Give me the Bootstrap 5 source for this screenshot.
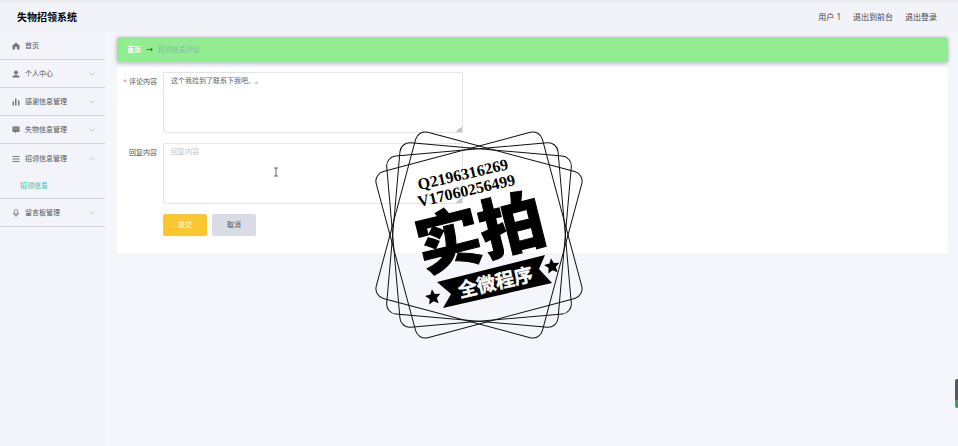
<!DOCTYPE html>
<html lang="zh-CN">
<head>
<meta charset="utf-8">
<meta name="viewport" content="width=device-width, initial-scale=1">
<title>失物招领系统</title>
<link href="https://cdn.jsdelivr.net/npm/bootstrap@5.3.0/dist/css/bootstrap.min.css" rel="stylesheet">
<style>
body{font-family:"Noto Sans","Noto Sans CJK SC",sans-serif;font-size:7px;line-height:12px;color:#606266;background:#f5f6fb;text-spacing-trim:space-all}
.topbar{background:#f2f3f9;border-top:2px solid #e9ebef;height:32px;padding:0 21px 0 17px}
.brand{font-size:10px;line-height:16px;font-weight:700;color:#000}
.topbar .btn,.topbar span{font-size:8px;line-height:12px;color:#444}
.side{width:105px;background:#f2f4fa;font-size:7px}
.side-link{height:28px;padding:0 10px 0 12px;color:#555;border-bottom:1px solid #d0d3da;line-height:12px;gap:5px;font-size:7px}
.side-link.open{border-bottom:0;height:30px}
.side-link svg{flex:none}
.sub{height:25px;padding-left:20px;color:#3fbfa8;border-bottom:1px solid #d0d3da}
.content-area{padding:5px 10px 0 12px}
.crumbs{background:#90ee90;height:25px;padding:0 10px;gap:5px;border-radius:2px;box-shadow:0 1px 4px rgba(80,90,110,.45);margin-bottom:5px}
.crumbs a{color:#fff;font-weight:700}
.crumbs .now{color:#8fb5ab}
.panel{padding:5px 6px 17px 0}
.fields{width:346px}
.field-row{margin-bottom:10px}
.field-label{width:40px;margin-right:6px;padding-top:4px;text-align:right;color:#555}
.field-label i{color:#d7838a;font-style:normal}
.field-box.form-control{height:61px;min-height:0;padding:2px 7px;font-size:7px;line-height:12px;border:1px solid #e2e4ea;border-radius:2px;color:#606266;text-spacing-trim:space-all;font-kerning:none;font-feature-settings:"chws" 0,"halt" 0}
.field-box::placeholder{color:#c0c4cc}
.field-box::-webkit-resizer{background:linear-gradient(135deg,transparent 80%,#c4c6ca 80%)}
.actions{gap:5px;padding-left:46px}
.actions .btn{width:44px;height:22px;font-size:7px;line-height:12px;padding:0;border:0;border-radius:2px}
.btn-send,.btn-send:hover{background:#fcc630;color:#fff}
.btn-back,.btn-back:hover{background:#d9dbe5;color:#555}
.stamp{left:369px;top:125px}
.caret-mark{left:273px;top:167px}
.edge-tab{right:0;top:379px;width:3px;height:29px;background:linear-gradient(#55585a 72%,#499b61 72%);border-radius:2px 0 0 2px}
.stamp .codes{font:700 16px "Liberation Serif",serif}
.stamp .big{font:900 65px "Noto Sans CJK SC",sans-serif;stroke:#000;stroke-width:1}
.stamp .ribbon{font:700 19px "Noto Sans CJK SC",sans-serif;fill:#fff;stroke:#fff;stroke-width:.4}
</style>
<script src="https://cdn.jsdelivr.net/npm/bootstrap@5.3.0/dist/js/bootstrap.bundle.min.js"></script>
</head>
<body class="min-vh-100 d-flex flex-column position-relative overflow-hidden">
<header class="topbar d-flex align-items-center justify-content-between">
  <h1 class="brand m-0">失物招领系统</h1>
  <div class="d-flex align-items-center gap-2">
    <span class="me-1">用户 1</span>
    <button type="button" class="btn p-0 border-0 me-1">退出到前台</button>
    <button type="button" class="btn p-0 border-0">退出登录</button>
  </div>
</header>
<div class="d-flex flex-grow-1">
  <nav class="side flex-shrink-0" aria-label="菜单">
    <a href="#" class="side-link d-flex align-items-center text-decoration-none"><svg width="8" height="8" viewBox="0 0 16 16" fill="#777"><path d="M8 1 1 7v8h5v-5h4v5h5V7z"/></svg>首页</a>
    <a href="#" class="side-link d-flex align-items-center text-decoration-none"><svg width="8" height="8" viewBox="0 0 16 16" fill="#777"><circle cx="8" cy="5" r="4"/><path d="M1 15v-2q1-3 7-3t7 3v2z"/></svg>个人中心<svg class="ms-auto" width="6" height="6" viewBox="0 0 12 12" fill="none" stroke="#999"><path d="m1 3 5 5 5-5"/></svg></a>
    <a href="#" class="side-link d-flex align-items-center text-decoration-none"><svg width="8" height="8" viewBox="0 0 16 16" fill="#777"><path d="M1 7h3v8H1zM6 1h3v14H6zM12 5h3v10h-3z"/></svg>感谢信息管理<svg class="ms-auto" width="6" height="6" viewBox="0 0 12 12" fill="none" stroke="#999"><path d="m1 3 5 5 5-5"/></svg></a>
    <a href="#" class="side-link d-flex align-items-center text-decoration-none"><svg width="8" height="8" viewBox="0 0 16 16" fill="#777"><path d="M1 1h14v11H9l-3 3v-3H1z"/><path d="M4 5h8M4 8h8" stroke="#aaa"/></svg>失物信息管理<svg class="ms-auto" width="6" height="6" viewBox="0 0 12 12" fill="none" stroke="#999"><path d="m1 3 5 5 5-5"/></svg></a>
    <a href="#" class="side-link open d-flex align-items-center text-decoration-none"><svg width="8" height="8" viewBox="0 0 16 16" stroke="#777" stroke-width="2"><path d="M1 3h14M1 8h14M1 13h14"/></svg>招领信息管理<svg class="ms-auto" width="6" height="6" viewBox="0 0 12 12" fill="none" stroke="#999"><path d="m1 8 5-5 5 5"/></svg></a>
    <a href="#" class="sub d-flex align-items-center text-decoration-none">招领信息</a>
    <a href="#" class="side-link d-flex align-items-center text-decoration-none"><svg width="8" height="8" viewBox="0 0 16 16" fill="none" stroke="#777" stroke-width="1.500"><rect x="5" y="1" width="6" height="10" rx="3"/><path d="M3 7v1q0 5 5 5t5-5V7M8 13v3"/></svg>留言板管理<svg class="ms-auto" width="6" height="6" viewBox="0 0 12 12" fill="none" stroke="#999"><path d="m1 3 5 5 5-5"/></svg></a>
  </nav>
  <main class="content-area flex-grow-1">
    <div class="crumbs d-flex align-items-center"><a href="#" class="text-decoration-none">首页</a><span class="text-dark">→</span><span class="now">招领信息评论</span></div>
    <form class="panel bg-white">
      <div class="fields">
        <div class="field-row d-flex"><label class="field-label flex-shrink-0" for="comment"><i>*</i> 评论内容</label><textarea class="form-control field-box" id="comment">这个我捡到了联系下我吧。。</textarea></div>
        <div class="field-row d-flex"><label class="field-label flex-shrink-0" for="reply">回复内容</label><textarea class="form-control field-box" id="reply" placeholder="回复内容"></textarea></div>
        <div class="actions d-flex"><button type="button" class="btn btn-send">提交</button><button type="button" class="btn btn-back">取消</button></div>
      </div>
    </form>
  </main>
</div>
<svg class="caret-mark position-absolute pe-none" width="6" height="10" viewBox="0 0 6 10" fill="none" stroke="#666" stroke-width="1"><path d="M1 1h4M3 1v8M1 9h4"/></svg>
<svg class="stamp position-absolute pe-none" width="220" height="220" viewBox="-110 -110 220 220">
  <g fill="none" stroke="#111" stroke-width="1">
    <rect x="-86" y="-86" width="172" height="172" rx="10" transform="rotate(15)"/>
    <rect x="-86" y="-86" width="172" height="172" rx="10" transform="rotate(5)"/>
    <rect x="-86" y="-86" width="172" height="172" rx="10" transform="rotate(-5)"/>
    <rect x="-86" y="-86" width="172" height="172" rx="10" transform="rotate(-15)"/>
  </g>
  <text class="codes" transform="translate(-60 -45) rotate(-13)">Q2196316269</text>
  <text class="codes" transform="translate(-60 -28) rotate(-13)">V17060256499</text>
  <text class="big" text-anchor="middle" transform="translate(7 21) rotate(-14)">实拍</text>
  <path d="M-42 47 66 20 60 34 73 48-36 73-28 59z"/>
  <text class="ribbon" text-anchor="middle" transform="translate(18 54) rotate(-13)">全微程序</text>
  <path transform="translate(-46 62) rotate(-8) scale(1.100)" d="m0-7 2 4.500 5 .5-3.700 3.400 1 4.900L0 3.800l-4.300 2.500 1-4.900L-7-2l5-.5z"/>
  <path transform="translate(73 31) rotate(-8) scale(1.100)" d="m0-7 2 4.500 5 .5-3.700 3.400 1 4.900L0 3.800l-4.300 2.500 1-4.900L-7-2l5-.5z"/>
</svg>
<div class="edge-tab position-absolute"></div>
</body>
</html>
